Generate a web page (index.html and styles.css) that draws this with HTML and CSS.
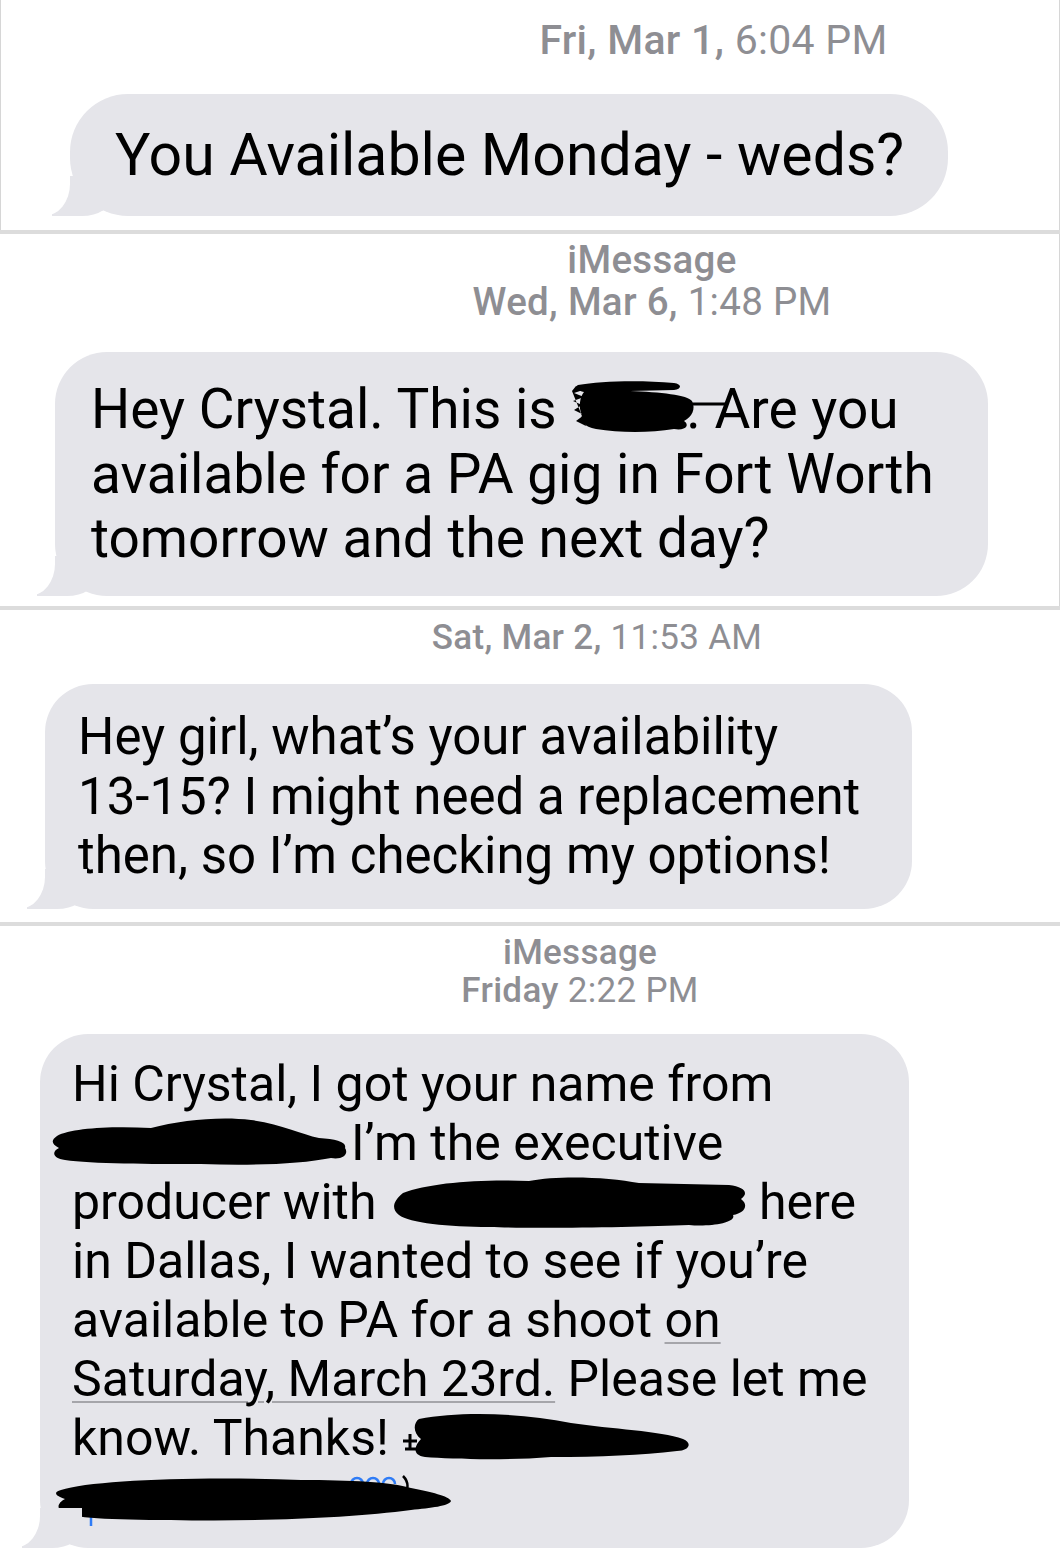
FILE: index.html
```html
<!DOCTYPE html>
<html lang="en">
<head>
<meta charset="utf-8">
<title>Messages</title>
<link rel="stylesheet" href="styles.css">
</head>
<body>
<div class="page">

  <section class="shot shot--a">
    <div class="stamp"><span class="stamp__day">Fri, Mar 1,</span> 6:04 PM</div>
    <div class="bubble">You Available Monday - weds?</div>
  </section>

  <div class="divider"></div>

  <section class="shot shot--b">
    <div class="stamp"><span class="stamp__service">iMessage</span><br><span class="stamp__day">Wed, Mar 6,</span> 1:48 PM</div>
    <div class="bubble">Hey Crystal. This is <svg class="redact redact--b1" width="116" height="64" viewBox="0 0 116 64" overflow="visible"><path d="M2 14 L6 9 L16 12 L4 16 L14 20 L3 24 L12 28 L4 33 L14 38 L6 44 L16 49 Z"/><path d="M8 8 C30 4 70 3 104 6 C112 7 112 12 104 13 L60 14 C90 15 118 18 122 24 C126 32 122 40 114 44 C120 48 116 54 104 52 C80 56 50 56 26 52 C14 50 10 44 12 38 C8 30 10 20 14 15 C8 14 4 10 8 8 Z"/><path d="M104 27 L158 27" stroke="#000" stroke-width="3" fill="none"/></svg>. Are you<br>available for a PA gig in Fort Worth<br>tomorrow and the next day?</div>
  </section>

  <div class="divider"></div>

  <section class="shot shot--c">
    <div class="stamp"><span class="stamp__day">Sat, Mar 2,</span> 11:53 AM</div>
    <div class="bubble">Hey girl, what’s your availability<br>13-15? I might need a replacement<br>then, so I’m checking my options!</div>
  </section>

  <div class="divider"></div>

  <section class="shot shot--d">
    <div class="stamp"><span class="stamp__service">iMessage</span><br><span class="stamp__day">Friday</span> 2:22 PM</div>
    <div class="bubble">Hi Crystal, I got your name from<br><svg class="redact redact--lead" width="300" height="59" viewBox="0 0 300 59"><path d="M6 22 C20 14 60 12 100 14 C130 6 170 2 200 6 C230 10 250 20 268 24 C285 25 296 28 294 34 C298 40 292 46 280 44 C250 50 200 52 150 50 C100 50 40 50 14 46 C2 44 0 38 8 34 C0 30 0 26 6 22 Z"/></svg>I’m the executive<br>producer with <svg class="redact redact--mid" width="362" height="59" viewBox="0 0 362 59"><path d="M14 20 C40 10 90 6 140 8 C170 2 220 4 250 10 L340 12 C356 14 360 20 352 26 C360 32 356 40 344 42 C348 50 320 54 300 52 C250 54 150 56 100 54 C60 54 20 50 10 42 C2 36 4 28 14 20 Z"/></svg>here<br>in Dallas, I wanted to see if you’re<br>available to PA for a shoot <span class="link">on</span><br><span class="link">Saturday, March 23rd.</span> Please let me<br>know. Thanks! <svg class="redact redact--tail" width="300" height="59" viewBox="0 0 300 59"><path d="M2 32 L16 32 M9 25 L9 40 M4 40 L16 40" stroke="#000" stroke-width="3" fill="none"/><path d="M18 10 C60 2 120 4 170 14 C210 20 260 22 282 30 C292 34 288 42 276 42 C240 46 200 48 150 48 C100 52 50 50 24 48 C10 46 14 36 20 30 C12 24 12 14 18 10 Z"/></svg><br><svg class="redact redact--lead" width="402" height="59" viewBox="0 0 402 59"><path d="M300 16 a6 6 0 0 1 12 0 M316 16 a6 6 0 0 1 12 0 M332 16 a6 6 0 0 1 12 0 M40 48 l0 10" stroke="#2f7cf6" stroke-width="2.5" fill="none"/><path d="M352 8 C358 14 358 22 352 28" stroke="#000" stroke-width="2.5" fill="none"/><path d="M10 22 C40 12 150 8 250 12 C300 12 340 14 360 20 C380 24 398 28 400 33 C398 38 380 40 360 42 C300 50 200 54 120 52 C60 52 20 50 12 44 C4 40 8 34 14 31 C4 28 2 24 10 22 Z"/></svg></div>
  </section>

</div>
</body>
</html>
```

FILE: styles.css
```css
html, body {
  margin: 0;
  padding: 0;
  background: #ffffff;
}

.page {
  width: 1060px;
  display: flex;
  flex-direction: column;
  font-family: Roboto, "Liberation Sans", Arial, sans-serif;
}

.divider {
  height: 4px;
  background: #dcdcdc;
}

.shot {
  box-sizing: border-box;
  display: flex;
  flex-direction: column;
  align-items: flex-start;
  background: #ffffff;
}

.stamp {
  align-self: stretch;
  text-align: center;
  color: #8e8e93;
  font-weight: 400;
  letter-spacing: 0.3px;
  white-space: nowrap;
}

.stamp__day,
.stamp__service {
  font-weight: 500;
}

.bubble {
  position: relative;
  box-sizing: border-box;
  background: #e5e5ea;
  color: #000000;
  white-space: nowrap;
}

/* iMessage tail */
.bubble::before {
  content: "";
  position: absolute;
  left: -18px;
  bottom: 0;
  width: 60px;
  height: 40px;
  background: #e5e5ea;
  border-bottom-right-radius: 30px 20px;
}

.bubble::after {
  content: "";
  position: absolute;
  left: -60px;
  bottom: 0;
  width: 60px;
  height: 40px;
  background: #ffffff;
  border-bottom-right-radius: 26px 32px;
}

.redact {
  display: inline-block;
  vertical-align: top;
  fill: #000000;
}

.link {
  text-decoration: underline;
  text-decoration-color: #a5a5aa;
  text-decoration-thickness: 2px;
  text-underline-offset: 5px;
}

/* Panel A */
.shot--a {
  height: 230px;
  padding-top: 17px;
  border-left: 1px solid #d6d6d6;
  border-right: 1px solid #d6d6d6;
}

.shot--a .stamp {
  font-size: 41px;
  line-height: 46px;
  padding-left: 367px;
}

.shot--a .bubble {
  margin-top: 31px;
  margin-left: 69px;
  width: 878px;
  height: 122px;
  padding: 26px 0 0 45px;
  font-size: 59px;
  line-height: 70px;
  border-radius: 58px;
}

/* Panel B */
.shot--b {
  height: 372px;
  padding-top: 5px;
  border-right: 1px solid #d6d6d6;
}

.shot--b .stamp {
  font-size: 38.5px;
  line-height: 42px;
  padding-left: 245px;
}

.shot--b .bubble {
  margin-top: 29px;
  margin-left: 55px;
  width: 933px;
  height: 244px;
  padding: 25px 0 0 36px;
  font-size: 55px;
  line-height: 64.5px;
  border-radius: 52px;
}

/* Panel C */
.shot--c {
  height: 312px;
  padding-top: 7px;
}

.shot--c .stamp {
  font-size: 35px;
  line-height: 42px;
  padding-left: 134px;
}

.shot--c .bubble {
  margin-top: 25px;
  margin-left: 45px;
  width: 867px;
  height: 225px;
  padding: 23px 0 0 33px;
  font-size: 51px;
  line-height: 59.5px;
  border-radius: 48px;
}

/* Panel D */
.shot--d {
  height: 628px;
  padding-top: 8px;
}

.shot--d .stamp {
  font-size: 35px;
  line-height: 38px;
  padding-left: 100px;
}

.shot--d .bubble {
  margin-top: 24px;
  margin-left: 40px;
  width: 869px;
  height: 514px;
  padding: 21px 0 0 32px;
  font-size: 50px;
  line-height: 59px;
  border-radius: 48px;
}

.redact--lead {
  margin-left: -21px;
}

.redact--mid {
  margin-right: 8px;
}
```
